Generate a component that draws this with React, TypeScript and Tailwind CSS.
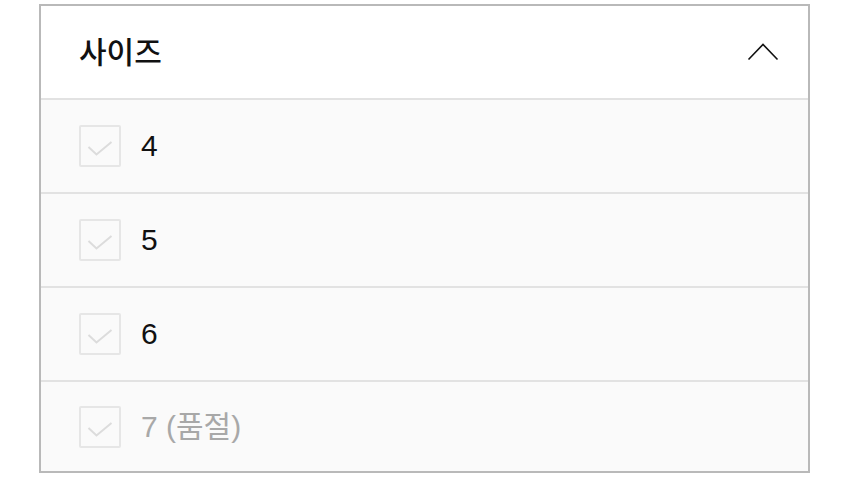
import React from 'react';

const sizes = [
  { label: '4', soldOut: false },
  { label: '5', soldOut: false },
  { label: '6', soldOut: false },
  { label: '7 (품절)', soldOut: true },
];

export default function App() {
  return (
    <div
      className="w-[850px] h-[477px] bg-white pl-[39px] pt-[4px]"
      style={{ fontFamily: '"Liberation Sans", "Noto Sans CJK KR", sans-serif' }}
    >
      <div className="w-[771px] h-[469px] border-2 border-[#b9b9b9] flex flex-col">
        {/* Header */}
        <div className="h-[92px] shrink-0 bg-white flex items-center justify-between pl-[38px] pr-[30px]">
          <span className="text-[30px] font-medium text-[#111] leading-none mt-[2px]">사이즈</span>
          <svg width="32" height="20" viewBox="0 0 32 20" fill="none" className="-mt-[2px] -mr-[1px]">
            <path d="M1.5 18.5 L16 3.5 L30.5 18.5" stroke="#111" strokeWidth="1.6" />
          </svg>
        </div>

        {sizes.map((s, i) => (
          <div
            key={s.label}
            className={`border-t-2 border-[#e2e2e2] bg-[#fafafa] flex items-center pl-[38px] ${
              i === sizes.length - 1 ? 'flex-1' : 'h-[94px] shrink-0'
            }`}
          >
            <div className="w-[42px] h-[42px] border-2 border-[#e6e6e6] rounded-[2px] flex items-center justify-center bg-[#fafafa]">
              <svg width="26" height="15" viewBox="0 0 26 15" fill="none" className="mt-[5px]">
                <path d="M1.5 6 L9.5 13.5 L24.5 1" stroke="#dcdcdc" strokeWidth="2" />
              </svg>
            </div>
            <span
              className={`ml-[20px] text-[30px] leading-none ${s.soldOut ? 'text-[#a8a8a8]' : 'text-[#111]'}`}
            >
              {s.label}
            </span>
          </div>
        ))}
      </div>
    </div>
  );
}
